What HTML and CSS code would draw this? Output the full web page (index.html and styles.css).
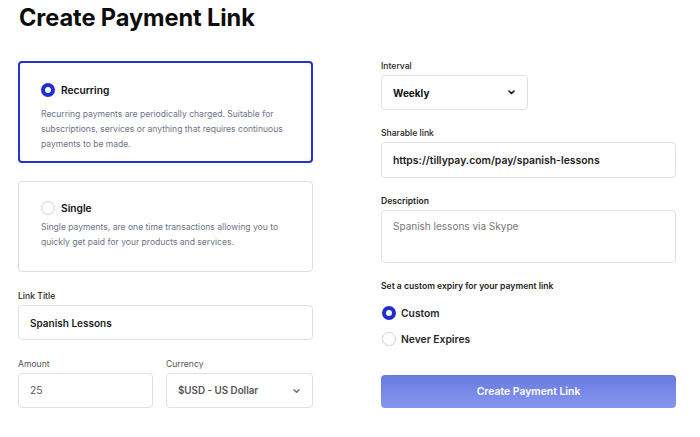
FILE: index.html
```html
<!DOCTYPE html>
<html lang="en">
<head>
<meta charset="utf-8">
<title>Create Payment Link</title>
<link rel="stylesheet" href="styles.css">
</head>
<body>
<main class="page">
  <h1 class="title">Create Payment Link</h1>
  <div class="columns">
    <section class="col col-left">
      <div class="card card-active">
        <div class="radio-row">
          <span class="radio radio-on"></span>
          <span class="radio-label">Recurring</span>
        </div>
        <p class="card-text card-text-first">Recurring payments are periodically charged. Suitable for subscriptions, services or anything that requires continuous payments to be made.</p>
      </div>
      <div class="card card-idle">
        <div class="radio-row">
          <span class="radio"></span>
          <span class="radio-label">Single</span>
        </div>
        <p class="card-text card-text-second">Single payments, are one time transactions allowing you to quickly get paid for your products and services.</p>
      </div>
      <div class="field field-title">
        <label class="label">Link Title</label>
        <div class="input input-strong input-title">Spanish Lessons</div>
      </div>
      <div class="field-row">
        <div class="field field-amount">
          <label class="label label-light">Amount</label>
          <div class="input input-muted">25</div>
        </div>
        <div class="field field-currency">
          <label class="label label-light">Currency</label>
          <div class="input input-select input-semi">
            <span>$USD - US Dollar</span>
            <svg class="chev" width="7" height="4" viewBox="0 0 7 4"><path d="M1 0.8l2.5 2.4 2.5-2.4" fill="none" stroke="#666" stroke-width="1.3" stroke-linecap="round" stroke-linejoin="round"/></svg>
          </div>
        </div>
      </div>
    </section>
    <section class="col col-right">
      <div class="field">
        <label class="label">Interval</label>
        <div class="input input-select input-interval input-bold">
          <span>Weekly</span>
          <svg class="chev" width="7" height="5" viewBox="0 0 7 5"><path d="M1 1l2.5 2.5 2.5-2.5" fill="none" stroke="#111" stroke-width="1.6" stroke-linecap="round" stroke-linejoin="round"/></svg>
        </div>
      </div>
      <div class="field">
        <label class="label">Sharable link</label>
        <div class="input input-strong input-link">https://tillypay.com/pay/spanish-lessons</div>
      </div>
      <div class="field">
        <label class="label label-bold">Description</label>
        <div class="textarea">Spanish lessons via Skype</div>
      </div>
      <div class="field">
        <p class="label label-bold">Set a custom expiry for your payment link</p>
        <div class="options">
          <div class="option">
            <span class="radio radio-on"></span>
            <span class="option-label">Custom</span>
          </div>
          <div class="option">
            <span class="radio"></span>
            <span class="option-label">Never Expires</span>
          </div>
        </div>
      </div>
      <button class="btn" type="button">Create Payment Link</button>
    </section>
  </div>
</main>
</body>
</html>
```
FILE: styles.css
```css
* { box-sizing: border-box; }
html, body { margin: 0; padding: 0; background: #ffffff; }
body {
  font-family: Inter, "Noto Sans", "Liberation Sans", sans-serif;
  color: #1a1a1a;
}
.page { padding: 0 24px 0 18px; }
.title {
  margin: 0 0 0 1px;
  font-size: 23.6px;
  line-height: 36px;
  font-weight: 700;
  letter-spacing: -0.1px;
  color: #0d0d0d;
}
.columns {
  display: grid;
  grid-template-columns: 295px 295px;
  column-gap: 68px;
  margin-top: 23px;
}
.col { display: flex; flex-direction: column; }
.col-left { margin-top: 2px; }

.card {
  border-radius: 4px;
  background: #fff;
}
.card-active {
  border: 2px solid #2634cf;
  padding: 20px 20px 9px 21px;
  height: 102px;
}
.card-idle {
  border: 1px solid #dcdde3;
  padding: 19px 20px 0 22px;
  height: 91px;
  margin-top: 18px;
}
.radio-row { display: flex; align-items: center; height: 14px; }
.radio {
  width: 14px; height: 14px;
  border-radius: 50%;
  border: 1px solid #cfd1d8;
  background: #fff;
  flex: none;
}
.radio-on { border: 4px solid #1f2fcf; }
.radio-label {
  margin-left: 6px;
  font-size: 10.2px;
  font-weight: 600;
  color: #111;
}
.card-text {
  margin: 0;
  font-size: 8.55px;
  line-height: 15px;
  color: #6e7385;
}
.card-text-first { margin-top: 10px; }
.card-text-second { margin-top: 5px; }

.field { display: flex; flex-direction: column; }
.label {
  margin: 0 0 2px;
  font-size: 8.6px;
  line-height: 14px;
  font-weight: 500;
  color: #222;
}
.label-bold { font-weight: 600; }
.label-light { font-weight: 400; color: #555; }
.field-title { margin-top: 17px; }
.field-row { display: flex; gap: 13px; margin-top: 17px; }
.field-amount { width: 135px; }
.field-currency { width: 147px; }

.input {
  height: 35px;
  border: 1px solid #dfe0e6;
  border-radius: 4px;
  display: flex;
  align-items: center;
  padding: 0 11px;
  font-size: 10.4px;
  color: #1d1d1d;
}
.input-title { font-size: 10px; }
.input-strong { font-weight: 600; }
.input-muted { color: #555; font-weight: 400; }
.input-semi { color: #555; font-weight: 600; font-size: 9.8px; }
.input-bold { font-weight: 700; color: #111; font-size: 10px; }
.input-select { justify-content: space-between; padding-right: 12px; }
.input-interval { width: 147px; }
.input-link { height: 36px; }
.chev { flex: none; }

.col-right .field + .field { margin-top: 16px; }
.textarea {
  height: 53px;
  border: 1px solid #dfe0e6;
  border-radius: 4px;
  padding: 8px 11px;
  font-size: 10px;
  line-height: 15px;
  color: #777;
}
.options { display: flex; flex-direction: column; gap: 12px; margin-top: 11px; }
.option { display: flex; align-items: center; height: 14px; }
.option .radio { margin-left: 1px; }
.option-label {
  margin-left: 5px;
  font-size: 10.3px;
  font-weight: 600;
  color: #2a2a2a;
}
.btn {
  margin-top: 29px;
  height: 33px;
  width: 295px;
  border: none;
  border-radius: 4px;
  background: linear-gradient(180deg, #687ae1 0%, #8696ee 100%);
  color: #fff;
  font-family: inherit;
  font-size: 10.4px;
  font-weight: 600;
}
```
